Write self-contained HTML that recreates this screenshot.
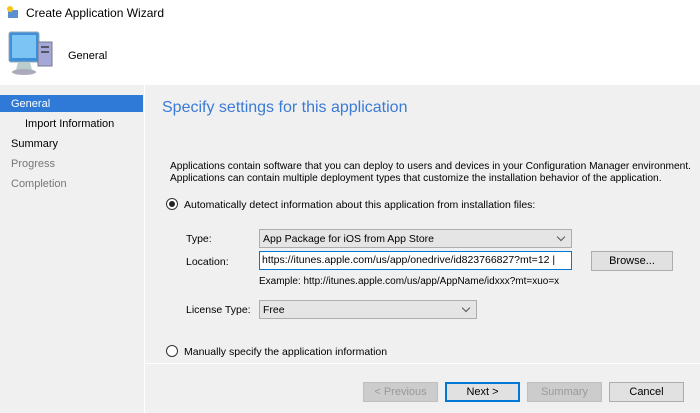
<!DOCTYPE html>
<html><head><style>
*{margin:0;padding:0;box-sizing:border-box}
body{width:700px;height:413px;background:#f0f0f0;font-family:"Liberation Sans",sans-serif;font-size:11px;color:#000;position:relative;overflow:hidden}
.a{position:absolute;white-space:nowrap}
.btn{position:absolute;height:20px;border:1px solid #adadad;background:#e1e1e1;text-align:center;line-height:18px;font-size:11px}
.combo{position:absolute;height:19px;border:1px solid #adadad;background:#e5e5e5;padding-left:3px;line-height:18px;font-size:10.5px}
.combo:after{content:"";position:absolute;right:7px;top:4px;width:5px;height:5px;border-right:1px solid #555;border-bottom:1px solid #555;transform:rotate(45deg)}
.radio{position:absolute;width:12px;height:12px;border:1px solid #333;border-radius:50%;background:#fff}
</style></head><body>
<div class="a" style="left:0;top:0;width:700px;height:85px;background:#fff"></div>
<svg class="a" style="left:6px;top:5px" width="14" height="14"><rect x="2" y="5" width="10" height="8" fill="#5a8fd0"/><circle cx="4" cy="4" r="3" fill="#f5c518"/></svg>
<div class="a" style="left:26px;top:6px;font-size:12px">Create Application Wizard</div>
<svg class="a" style="left:6px;top:30px" width="50" height="48">
<rect x="3" y="2" width="30" height="30" rx="2" fill="#3f8fd8" stroke="#9ab" />
<rect x="6" y="5" width="24" height="23" fill="#7cc4f4"/>
<path d="M12 32 L24 32 L26 40 L10 40 Z" fill="#bcc"/>
<ellipse cx="18" cy="42" rx="12" ry="3" fill="#aab"/>
<rect x="32" y="12" width="14" height="24" fill="#a3a8d8" stroke="#778"/>
<rect x="35" y="16" width="8" height="2" fill="#556"/><rect x="35" y="21" width="8" height="2" fill="#556"/>
</svg>
<div class="a" style="left:68px;top:50px;font-size:11px">General</div>
<div class="a" style="left:144px;top:85px;width:1px;height:328px;background:#fff"></div>
<div class="a" style="left:0;top:95px;width:143px;height:17px;background:#2f7ad6"></div>
<div class="a" style="left:11px;top:98px;color:#fff">General</div>
<div class="a" style="left:25px;top:118px">Import Information</div>
<div class="a" style="left:11px;top:138px">Summary</div>
<div class="a" style="left:11px;top:158px;color:#777">Progress</div>
<div class="a" style="left:11px;top:178px;color:#777">Completion</div>
<div class="a" style="left:162px;top:99px;font-size:16px;color:#3a7bd5">Specify settings for this application</div>
<div class="a" style="left:170px;top:161px;line-height:12px;font-size:10.2px">Applications contain software that you can deploy to users and devices in your Configuration Manager environment.<br>Applications can contain multiple deployment types that customize the installation behavior of the application.</div>
<div class="radio" style="left:166px;top:198px"><div style="position:absolute;left:2px;top:2px;width:6px;height:6px;border-radius:50%;background:#222"></div></div>
<div class="a" style="left:184px;top:199px;font-size:10.5px">Automatically detect information about this application from installation files:</div>
<div class="a" style="left:186px;top:233px;font-size:10.5px">Type:</div>
<div class="combo" style="left:259px;top:229px;width:313px">App Package for iOS from App Store</div>
<div class="a" style="left:186px;top:256px;font-size:10.5px">Location:</div>
<div class="a" style="left:259px;top:251px;width:313px;height:19px;border:1px solid #0078d7;background:#fff;padding-left:2px;line-height:17px;font-size:10.5px">https://itunes.apple.com/us/app/onedrive/id823766827?mt=12 |</div>
<div class="btn" style="left:591px;top:251px;width:82px">Browse...</div>
<div class="a" style="left:259px;top:276px;font-size:10px">Example: http://itunes.apple.com/us/app/AppName/idxxx?mt=xuo=x</div>
<div class="a" style="left:186px;top:304px;font-size:10.5px">License Type:</div>
<div class="combo" style="left:259px;top:300px;width:218px">Free</div>
<div class="radio" style="left:166px;top:345px"></div>
<div class="a" style="left:184px;top:346px;font-size:10.5px">Manually specify the application information</div>
<div class="a" style="left:145px;top:363px;width:555px;height:1px;background:#fff"></div>
<div class="btn" style="left:363px;top:382px;width:75px;color:#999;background:#ccc;border-color:#bfbfbf">&lt; Previous</div>
<div class="btn" style="left:445px;top:382px;width:75px;border:2px solid #0078d7;line-height:16px">Next &gt;</div>
<div class="btn" style="left:527px;top:382px;width:75px;color:#999;background:#ccc;border-color:#bfbfbf">Summary</div>
<div class="btn" style="left:609px;top:382px;width:75px">Cancel</div>
</body></html>
